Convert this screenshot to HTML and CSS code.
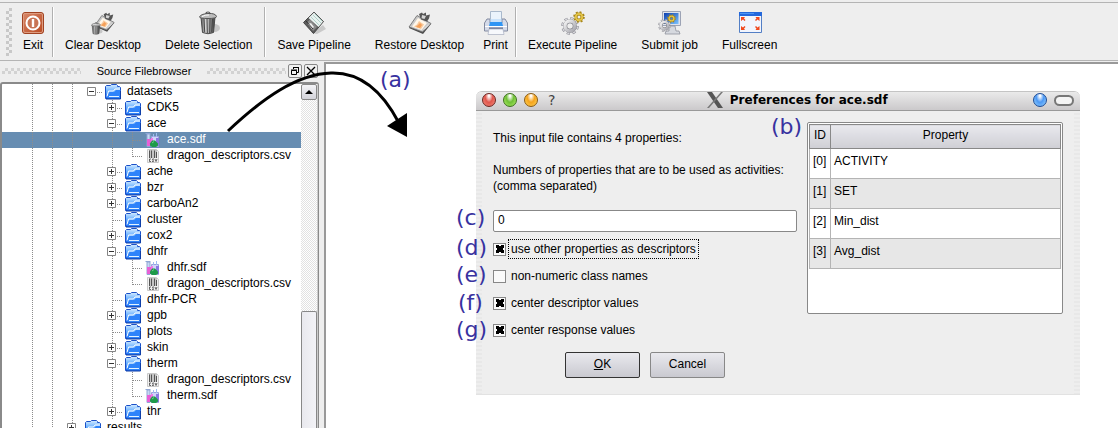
FILE: index.html
```html
<!DOCTYPE html>
<html lang="en">
<head>
<meta charset="utf-8">
<title>Preferences for ace.sdf</title>
<link rel="stylesheet" href="styles.css">
</head>
<body>
<svg class="defs" aria-hidden="true">
  <defs>
    <linearGradient id="gRed" x1="0" y1="0" x2="1" y2="1"><stop offset="0" stop-color="#d98a6c"/><stop offset="1" stop-color="#b8481f"/></linearGradient>
    <linearGradient id="gMetal" x1="0" x2="1"><stop offset="0" stop-color="#555"/><stop offset=".35" stop-color="#ddd"/><stop offset=".7" stop-color="#888"/><stop offset="1" stop-color="#333"/></linearGradient>
    <linearGradient id="gFolder" x1="0" y1="0" x2="0" y2="1"><stop offset="0" stop-color="#d5ecff"/><stop offset=".5" stop-color="#63adff"/><stop offset="1" stop-color="#1565ee"/></linearGradient>
    <linearGradient id="gGear" x1="0" y1="0" x2="1" y2="1"><stop offset="0" stop-color="#f4f4f4"/><stop offset="1" stop-color="#a5a5ac"/></linearGradient>
    <linearGradient id="gScreen" x1="0" y1="0" x2="1" y2="1"><stop offset="0" stop-color="#0c3fae"/><stop offset="1" stop-color="#7cc4ff"/></linearGradient>
    <symbol id="folder" viewBox="0 0 16 16">
      <path d="M.5 14.500v-12l1-1h4l1-1h5l1 1v1h2l1 1v11z" fill="url(#gFolder)" stroke="#1a50c8"/>
      <path d="M2 12.500L3.500 7h5l1.500-2h5" fill="none" stroke="#fff"/>
      <path d="M2 14.500L4.500 8h5l1.500-2h4.500v8.500z" fill="#2e83fa"/>
      <path d="M4 12.500h10" stroke="#e4f3ff"/>
      <path d="M1 15h14.500v-8" fill="none" stroke="#0e3fa8"/>
    </symbol>
    <symbol id="sdf" viewBox="0 0 16 16">
      <path d="M.5 1.500h5M2 2v12.500h3V2z" fill="#c6d8f4" stroke="#8fa6d4"/>
      <path d="M2 7h4v7H2z" fill="#e95fd6"/>
      <path d="M6.500 4.500h7v10h-7z" fill="#cfd4fa" stroke="#9aa0dc"/>
      <path d="M8.500 2v3M11.500 1v4" stroke="#9dbcf0"/>
      <path d="M6 6h2v5H6z" fill="#f07ae4"/><path d="M11 6h3v8h-3z" fill="#8a78e0"/>
      <path d="M7 8.500h3l3 3v2l-2 1.500H7L5 13.500v-2z" fill="#1e9a4a"/>
      <path d="M7 11l2-1.500" stroke="#6cd28c"/>
    </symbol>
    <symbol id="csv" viewBox="0 0 16 16">
      <path d="M2.500 1.500h9l2 2v11h-11z" fill="#f1f1f1" stroke="#c9c9c9"/>
      <path d="M4 3h8M4 5h8M4 7h8M4 9h8" stroke="#999"/>
      <path d="M4.500 2.500V10M6.500 2.500V10M9.500 2.500V10M11.500 4V10" stroke="#555"/>
      <path d="M6 11H4.500v2.500H6M9 11H7.500l1 2.500H7M10 11l1 2.500 1-2.500" fill="none" stroke="#444" stroke-width=".8"/>
    </symbol>
    <symbol id="v" viewBox="0 0 20 16"><path d="M10.500 0v16" stroke="#8c8c8c" stroke-dasharray="1 1"/></symbol>
    <symbol id="t" viewBox="0 0 20 16"><path d="M10.500 0v16M11 8.500h9" stroke="#8c8c8c" stroke-dasharray="1 1"/></symbol>
    <symbol id="l" viewBox="0 0 20 16"><path d="M10.500 0v9M11 8.500h9" stroke="#8c8c8c" stroke-dasharray="1 1"/></symbol>
    <symbol id="m" viewBox="0 0 20 16"><path d="M5.500 3.500h8v8h-8z" fill="#fff" stroke="#858585"/><path d="M7 7.500h5" stroke="#333"/><path d="M15 8.500h5M10.500 0v3M10.500 12v4" stroke="#8c8c8c" stroke-dasharray="1 1"/></symbol>
    <symbol id="p" viewBox="0 0 20 16"><use href="#m" width="20" height="16"/><path d="M9.500 5v5" stroke="#333"/></symbol>
    <symbol id="e" viewBox="0 0 20 16"><path d="M5.500 3.500h8v8h-8z" fill="#fff" stroke="#858585"/><path d="M7 7.500h5" stroke="#333"/><path d="M15 8.500h5" stroke="#8c8c8c" stroke-dasharray="1 1"/></symbol>
    <symbol id="gear" viewBox="0 0 18 18">
      <circle cx="9" cy="9" r="7" fill="none" stroke="#8c8c94" stroke-width="3.600" stroke-dasharray="3 2.498"/>
      <circle cx="9" cy="9" r="7" fill="none" stroke="#d8d8dc" stroke-width="2.600" stroke-dasharray="2 3.498" stroke-dashoffset="-.5"/>
      <circle cx="9" cy="9" r="4.800" fill="none" stroke="#6f6f76" stroke-width="4"/>
      <circle cx="9" cy="9" r="5" fill="none" stroke="url(#gGear)" stroke-width="3.400"/>
    </symbol>
    <symbol id="goldgear" viewBox="0 0 12 12">
      <circle cx="6" cy="6" r="4.800" fill="none" stroke="#a8871a" stroke-width="2" stroke-dasharray="1.900 1.870"/>
      <circle cx="6" cy="6" r="3" fill="none" stroke="#a58313" stroke-width="3"/>
      <circle cx="6" cy="6" r="3.200" fill="none" stroke="#e4c548" stroke-width="1.800"/>
    </symbol>
    <symbol id="board" viewBox="0 0 24 24">
      <path d="M1 17L10 6l13 7-8 10z" fill="#4b4b4b"/>
      <path d="M1 16L9 4.500l14 8L14.500 21z" fill="#c9c9c9" stroke="#666" stroke-width=".8"/>
      <path d="M4 15.500L10 7l9 5-5.500 7z" fill="#fff7ea"/>
      <path d="M6 15.500l3-2 2-3.500 2 1.500 3 2-3 4.500z" fill="#f8c89a"/><path d="M8 16l4-4 2 2-2 3z" fill="#f5a058"/>
      <path d="M11 3l3-1.500 1 1.500 3-1.500v3l4-1-1 4-2 3-6-2z" fill="#555"/><path d="M14 4l4 1-1.500 3-3-.8z" fill="#d4d4d4"/>
      <path d="M16 18.500l5-5" stroke="#eee"/>
    </symbol>
    <symbol id="bin" viewBox="0 0 24 24">
      <ellipse cx="17.500" cy="17" rx="5.500" ry="4" fill="#c6c6c6"/>
      <path d="M4 6h14l-1.500 15.500q-5.500 2.500-11 0z" fill="url(#gMetal)" stroke="#4a4a4a"/>
      <path d="M7 8l.7 13M10 8l.3 14M13 8l-.3 14M15.500 8l-.8 13" stroke="#474747"/>
      <path d="M2.500 6q1-3 8.500-3.500t8.500 3q0 2-8.500 2T2.500 6z" fill="#bcbcbc" stroke="#555"/>
      <path d="M9 3q0-2 2-2t2 2" fill="none" stroke="#555" stroke-width="1.200"/><path d="M5 5.500q4-2 7-1.500" stroke="#fff" fill="none"/>
    </symbol>
  </defs>
</svg>

<header class="toolbar">
  <span class="grip"></span>
  <button class="tool short"><svg viewBox="0 0 24 24"><rect x="1.500" y="1.500" width="21" height="21" rx="2.500" fill="url(#gRed)" stroke="#a14322"/><rect x="2.500" y="2.500" width="19" height="19" rx="1.500" fill="none" stroke="#dd9c80"/><circle cx="12" cy="12" r="6.500" fill="#c87555" stroke="#fff" stroke-width="2"/><path d="M12 8v8" stroke="#fff" stroke-width="2.400"/></svg>Exit</button>
  <span class="sep"></span>
  <button class="tool"><svg viewBox="0 0 24 24"><use href="#board" x="3" width="21" height="22"/><use href="#bin" x="-1" y="11" width="13" height="13"/></svg>Clear Desktop</button>
  <button class="tool"><svg viewBox="0 0 24 24"><use href="#bin" width="24" height="24"/></svg>Delete Selection</button>
  <span class="sep"></span>
  <button class="tool"><svg viewBox="0 0 24 24"><path d="M9 22l12-8 3 4-9 5z" fill="#c9c9c9"/><path d="M1.500 11.500L12 1l9.500 9.500L11.500 22.500z" fill="#5c5c5c" stroke="#444"/><path d="M6.500 7L12 1.500l9 9-4.500 5.500z" fill="#e9f1ef"/><path d="M11 4l8 8M9 6l8.500 8.500M13 3l7 7" stroke="#9fc9bf" stroke-width=".8"/><path d="M5 11.500l3-3 7 7.500-4 4z" fill="#8b8b8b"/><path d="M6 13l3-1 3 4-2 2z" fill="#eee"/><path d="M4 10l7 8" stroke="#333"/></svg>Save Pipeline</button>
  <button class="tool"><svg viewBox="0 0 24 24"><use href="#board" width="24" height="24"/></svg>Restore Desktop</button>
  <button class="tool short"><svg viewBox="0 0 24 24"><path d="M6.500.5h11v12h-11z" fill="#eaf3fc" stroke="#a9b9cc"/><path d="M3 8h3v4h12V8h3l2.500 4v8h-23v-8z" fill="#d5dbe9" stroke="#828aa0"/><path d="M6.500 8v3h11V8z" fill="#c9e2fa"/><path d="M6 11h12l1 4H5z" fill="#2f95f4"/><path d="M1 15.500h22" stroke="#fff"/><path d="M5 16.500h14v2H5z" fill="#5e6886"/><path d="M5 18h14l1 5.500H4z" fill="#f6f8fc" stroke="#b0b6c6" stroke-width=".8"/></svg>Print</button>
  <span class="sep"></span>
  <button class="tool"><svg viewBox="0 0 24 24"><use href="#gear" x="0" y="6" width="18" height="18"/><use href="#goldgear" x="12" y="0" width="12" height="12"/></svg>Execute Pipeline</button>
  <button class="tool"><svg viewBox="0 0 24 24"><path d="M4.500.5h18v14h-18z" fill="#dfe3ec" stroke="#9ca3b5"/><path d="M6 2h14.500v11H6z" fill="url(#gScreen)"/><path d="M11 15h6l1 5h3l1 3H7l1-3h3z" fill="#d6d9df" stroke="#8f939d" stroke-width=".8"/><use href="#goldgear" x="9" y="3" width="9" height="9"/><use href="#gear" x="0" y="8" width="13" height="13"/></svg>Submit job</button>
  <button class="tool"><svg viewBox="0 0 24 24"><path d="M1.500 1.500h22v20h-22z" fill="#f2f5fd" stroke="#537fc5"/><path d="M1 1h23v4H1z" fill="#2468dc"/><path d="M2 2h14v1H2z" fill="#4b93f4"/><g fill="#f0481e"><path d="M3 6h4L6 7.500l1.500 1.500-1 1L5 8.500 3 10zM21.500 6h-4l1 1.500L17 9l1 1 1.500-1.500 2 1.500zM3 19h4l-1-1.500L7.500 16l-1-1L5 16.500 3 15zM21.500 19h-4l1-1.500L17 16l1-1 1.500 1.500 2-1.500z"/></g></svg>Fullscreen</button>
</header>

<main class="main">
  <aside class="dock">
    <div class="dock-title">
      <span class="dots"></span><h2>Source Filebrowser</h2><span class="dots"></span>
      <button class="mini" aria-label="Float"><svg viewBox="0 0 12 12"><path d="M4.500 4V2.500h5v5H8M4 2.500h6M2.500 5.500h5v4h-5zM2 5h6" fill="none" stroke="#000"/></svg></button>
      <button class="mini" aria-label="Close"><svg viewBox="0 0 12 12"><path d="M2 2l8 8M10 2l-8 8" stroke="#000" stroke-width="1.300"/></svg></button>
    </div>
    <div class="browser">
      <ul class="tree">
        <li><svg><use href="#v"/></svg><svg><use href="#v"/></svg><svg><use href="#v"/></svg><svg><use href="#e"/></svg><svg class="ico"><use href="#folder"/></svg>datasets</li>
        <li><svg><use href="#v"/></svg><svg><use href="#v"/></svg><svg><use href="#v"/></svg><svg></svg><svg><use href="#p"/></svg><svg class="ico"><use href="#folder"/></svg>CDK5</li>
        <li><svg><use href="#v"/></svg><svg><use href="#v"/></svg><svg><use href="#v"/></svg><svg></svg><svg><use href="#m"/></svg><svg class="ico"><use href="#folder"/></svg>ace</li>
        <li class="selected"><svg><use href="#v"/></svg><svg><use href="#v"/></svg><svg><use href="#v"/></svg><svg></svg><svg><use href="#v"/></svg><svg><use href="#t"/></svg><svg class="ico"><use href="#sdf"/></svg>ace.sdf</li>
        <li><svg><use href="#v"/></svg><svg><use href="#v"/></svg><svg><use href="#v"/></svg><svg></svg><svg><use href="#v"/></svg><svg><use href="#l"/></svg><svg class="ico"><use href="#csv"/></svg>dragon_descriptors.csv</li>
        <li><svg><use href="#v"/></svg><svg><use href="#v"/></svg><svg><use href="#v"/></svg><svg></svg><svg><use href="#p"/></svg><svg class="ico"><use href="#folder"/></svg>ache</li>
        <li><svg><use href="#v"/></svg><svg><use href="#v"/></svg><svg><use href="#v"/></svg><svg></svg><svg><use href="#p"/></svg><svg class="ico"><use href="#folder"/></svg>bzr</li>
        <li><svg><use href="#v"/></svg><svg><use href="#v"/></svg><svg><use href="#v"/></svg><svg></svg><svg><use href="#p"/></svg><svg class="ico"><use href="#folder"/></svg>carboAn2</li>
        <li><svg><use href="#v"/></svg><svg><use href="#v"/></svg><svg><use href="#v"/></svg><svg></svg><svg><use href="#t"/></svg><svg class="ico"><use href="#folder"/></svg>cluster</li>
        <li><svg><use href="#v"/></svg><svg><use href="#v"/></svg><svg><use href="#v"/></svg><svg></svg><svg><use href="#p"/></svg><svg class="ico"><use href="#folder"/></svg>cox2</li>
        <li><svg><use href="#v"/></svg><svg><use href="#v"/></svg><svg><use href="#v"/></svg><svg></svg><svg><use href="#m"/></svg><svg class="ico"><use href="#folder"/></svg>dhfr</li>
        <li><svg><use href="#v"/></svg><svg><use href="#v"/></svg><svg><use href="#v"/></svg><svg></svg><svg><use href="#v"/></svg><svg><use href="#t"/></svg><svg class="ico"><use href="#sdf"/></svg>dhfr.sdf</li>
        <li><svg><use href="#v"/></svg><svg><use href="#v"/></svg><svg><use href="#v"/></svg><svg></svg><svg><use href="#v"/></svg><svg><use href="#l"/></svg><svg class="ico"><use href="#csv"/></svg>dragon_descriptors.csv</li>
        <li><svg><use href="#v"/></svg><svg><use href="#v"/></svg><svg><use href="#v"/></svg><svg></svg><svg><use href="#t"/></svg><svg class="ico"><use href="#folder"/></svg>dhfr-PCR</li>
        <li><svg><use href="#v"/></svg><svg><use href="#v"/></svg><svg><use href="#v"/></svg><svg></svg><svg><use href="#p"/></svg><svg class="ico"><use href="#folder"/></svg>gpb</li>
        <li><svg><use href="#v"/></svg><svg><use href="#v"/></svg><svg><use href="#v"/></svg><svg></svg><svg><use href="#t"/></svg><svg class="ico"><use href="#folder"/></svg>plots</li>
        <li><svg><use href="#v"/></svg><svg><use href="#v"/></svg><svg><use href="#v"/></svg><svg></svg><svg><use href="#p"/></svg><svg class="ico"><use href="#folder"/></svg>skin</li>
        <li><svg><use href="#v"/></svg><svg><use href="#v"/></svg><svg><use href="#v"/></svg><svg></svg><svg><use href="#m"/></svg><svg class="ico"><use href="#folder"/></svg>therm</li>
        <li><svg><use href="#v"/></svg><svg><use href="#v"/></svg><svg><use href="#v"/></svg><svg></svg><svg><use href="#v"/></svg><svg><use href="#t"/></svg><svg class="ico"><use href="#csv"/></svg>dragon_descriptors.csv</li>
        <li><svg><use href="#v"/></svg><svg><use href="#v"/></svg><svg><use href="#v"/></svg><svg></svg><svg><use href="#v"/></svg><svg><use href="#l"/></svg><svg class="ico"><use href="#sdf"/></svg>therm.sdf</li>
        <li><svg><use href="#v"/></svg><svg><use href="#v"/></svg><svg><use href="#v"/></svg><svg></svg><svg><use href="#p"/></svg><svg class="ico"><use href="#folder"/></svg>thr</li>
        <li><svg><use href="#v"/></svg><svg><use href="#v"/></svg><svg><use href="#p"/></svg><svg class="ico"><use href="#folder"/></svg>results</li>
      </ul>
      <div class="scrollbar">
        <button class="up" aria-label="Scroll up"><svg viewBox="0 0 14 14"><path d="M3 9l4-4 4 4z"/></svg></button>
        <span class="track"></span>
        <span class="thumb"></span>
      </div>
    </div>
  </aside>

  <section class="workspace">
    <form class="dialog">
      <div class="titlebar">
        <span class="ball red"></span><span class="ball green"></span><span class="ball orange"></span><span class="help">?</span>
        <h1><svg viewBox="0 0 16 16"><path d="M0 0h5l11 16h-5z" fill="#555"/><path d="M14 0h2L2 16H0z" fill="#777"/></svg>Preferences for ace.sdf</h1>
        <span class="ball blue"></span><span class="pill"></span>
      </div>
      <div class="content">
        <div class="fields">
          <p>This input file contains 4 properties:</p>
          <label class="activities" for="act">Numbers of properties that are to be used as activities:<br>(comma separated)</label>
          <input class="line" id="act" type="text" value="0">
          <label class="check focus"><input type="checkbox" checked><span>use other properties as descriptors</span></label>
          <label class="check"><input type="checkbox"><span>non-numeric class names</span></label>
          <label class="check"><input type="checkbox" checked><span>center descriptor values</span></label>
          <label class="check"><input type="checkbox" checked><span>center response values</span></label>
          <div class="actions"><button class="push default" type="button"><u>O</u>K</button><button class="push" type="button">Cancel</button></div>
        </div>
        <div class="listing">
          <table>
            <thead><tr><th class="id">ID</th><th>Property</th></tr></thead>
            <tbody>
              <tr><td>[0]</td><td>ACTIVITY</td></tr>
              <tr><td>[1]</td><td>SET</td></tr>
              <tr><td>[2]</td><td>Min_dist</td></tr>
              <tr><td>[3]</td><td>Avg_dist</td></tr>
            </tbody>
          </table>
        </div>
      </div>
    </form>
  </section>
</main>

<svg class="arrow" viewBox="0 0 190 74" aria-hidden="true"><path d="M3 65C38 32 72 8 106 7C138 6 160 30 174 57" fill="none" stroke="#000" stroke-width="3"/><path d="M162 60l20-13v24z"/></svg>
<span class="note note-a">(a)</span>
<span class="note note-b">(b)</span>
<span class="note note-c">(c)</span>
<span class="note note-d">(d)</span>
<span class="note note-e">(e)</span>
<span class="note note-f">(f)</span>
<span class="note note-g">(g)</span>
</body>
</html>
```
FILE: styles.css
```css
* { box-sizing: border-box; }
body {
  margin: 0;
  height: 100vh;
  display: flex;
  flex-direction: column;
  position: relative;
  overflow: hidden;
  background: #eee;
  color: #000;
  font: 12px/16px "Liberation Sans", sans-serif;
}
button, input { font: inherit; color: inherit; margin: 0; }
h1, h2, p, ul { margin: 0; padding: 0; }
svg { display: block; flex: none; }
.defs { position: absolute; width: 0; height: 0; }

.toolbar {
  display: flex;
  align-items: stretch;
  margin-top: 2px;
  border-top: 1px solid #b4b4b4;
  border-bottom: 1px solid #b4b4b4;
  padding: 4px 4px 3px;
}
.grip {
  width: 6px;
  margin: 1px 2px;
  background: conic-gradient(#c8c8c8 25%, transparent 0 50%, #c8c8c8 0 75%, transparent 0) 0 0 / 6px 6px;
}
.tool {
  display: flex;
  flex-direction: column;
  align-items: center;
  gap: 2px;
  border: 0;
  background: none;
  padding: 4px 12px;
  white-space: nowrap;
}
.tool svg { width: 24px; height: 24px; }
.tool.short { padding-left: 7px; padding-right: 7px; }
.sep { width: 1px; background: #b0b0b0; box-shadow: 1px 0 #fff; }

.main { flex: 1; min-height: 0; display: flex; gap: 5px; }
.dock { flex: none; width: 319px; display: flex; flex-direction: column; min-height: 0; }
.dock-title { display: flex; align-items: center; gap: 2px; height: 21px; padding: 0 1px 2px 2px; }
.dock-title h2 { flex: none; padding: 0 14px; font-size: 11px; font-weight: 400; }
.dots {
  flex: 1;
  height: 6px;
  background: conic-gradient(#d2d2d2 25%, transparent 0 50%, #d2d2d2 0 75%, transparent 0) 0 0 / 6px 6px;
}
.mini {
  flex: none;
  width: 14px;
  height: 14px;
  padding: 0;
  border: 1px solid #888;
  border-radius: 2px;
  background: #f1f1f1;
}
.mini svg { width: 12px; height: 12px; }
.browser {
  flex: 1;
  min-height: 0;
  display: flex;
  overflow: hidden;
  border: 1px solid #8a8a8a;
  border-top-width: 2px;
  border-bottom: 0;
  border-left-width: 2px;
  border-radius: 3px 3px 0 0;
  background: #fff;
}
.tree { flex: 1; list-style: none; overflow: hidden; line-height: 14px; }
.tree li { display: flex; height: 16px; padding-left: 20px; white-space: nowrap; }
.tree svg { width: 20px; height: 16px; }
.tree .ico { width: 16px; margin: 0 6px 0 3px; }
.tree .selected { background: #678db2; color: #fff; }
.scrollbar { width: 17px; display: flex; flex-direction: column; border-right: 1px solid #ccc; }
.up { height: 16px; padding: 0; border: 1px solid #888; border-radius: 2px; background: linear-gradient(#f4f4f7, #d3d3da); }
.up svg { width: 14px; height: 14px; }
.track { flex: 212; background: conic-gradient(#e2e2e2 25%, #fff 0 50%, #e2e2e2 0 75%, #fff 0) 0 0 / 2px 2px; }
.thumb { flex: 116; border: 1px solid #888; border-bottom: 0; border-radius: 2px 2px 0 0; background: linear-gradient(90deg, #e9e9ee, #f3f3f7); }

.workspace { flex: 1; position: relative; border: 2px solid #999; border-width: 2px 0 0 2px; margin-top: 1px; background: #fff; overflow: hidden; }
.dialog {
  position: absolute;
  left: 150px;
  top: 27px;
  width: 604px;
  border-top: 1px solid #c4c4c4;
  border-bottom: 1px solid #e2e2e2;
  border-radius: 6px 6px 0 0;
  overflow: hidden;
  background: #eee;
}
.titlebar {
  display: flex;
  align-items: center;
  gap: 7px;
  height: 19px;
  padding: 0 6px 2px;
  border-bottom: 1px solid #999;
  background: linear-gradient(#eaeaea, #cbc9cb);
}
.titlebar h1 {
  flex: 1;
  display: flex;
  justify-content: center;
  gap: 7px;
  padding-left: 6px;
  font: bold 12px/16px "DejaVu Sans", sans-serif;
}
.titlebar h1 svg { width: 16px; height: 16px; }
.ball { width: 14px; height: 14px; border-radius: 50%; border: 1px solid; }
.red { border-color: #6b2520; background: radial-gradient(ellipse at 50% 15%, #fff 5%, #e0564c 45%, #f58e80); }
.green { border-color: #3b701c; background: radial-gradient(ellipse at 50% 15%, #fff 5%, #6fbf35 45%, #b4f26c); }
.orange { border-color: #8a5a10; background: radial-gradient(ellipse at 50% 15%, #fff 5%, #f5a31c 45%, #ffd75c); }
.blue { border-color: #1c4a94; background: radial-gradient(ellipse at 50% 15%, #fff 5%, #4c98f4 45%, #9cd6ff); }
.pill { width: 20px; height: 11px; border: 2px solid #777; border-radius: 6px; background: #f4f4f4; }
.help { padding-left: 3px; color: #444; font: 14px/16px "DejaVu Sans", sans-serif; }
.content {
  display: flex;
  gap: 10px;
  min-height: 283px;
  padding: 11px 17px 15px;
  background:
    repeating-linear-gradient(#eee 0 2px, #e8e8e8 2px 4px) left / 6px 100% no-repeat,
    repeating-linear-gradient(#eee 0 2px, #e8e8e8 2px 4px) right / 6px 100% no-repeat;
}
.fields { width: 304px; display: flex; flex-direction: column; padding-top: 8px; }
.activities { margin: 16px 0; white-space: nowrap; }
.line { width: 100%; height: 22px; padding: 0 4px 3px; border: 1px solid #888; border-radius: 2px; background: #fff; margin-bottom: 5px; }
.check { display: flex; align-items: center; gap: 2px; height: 20px; margin: 2px 0 5px; }
.check span { padding: 1px 2px; border: 1px solid transparent; }
.focus span { border: 1px dotted #000; }
.check input {
  appearance: none;
  width: 13px;
  height: 13px;
  border: 1px solid #888;
  background: #fafafa;
}
.check input:checked {
  background:
    linear-gradient(45deg, transparent 36%, #000 36% 64%, transparent 64%) center / 8px 8px no-repeat,
    linear-gradient(-45deg, transparent 36%, #000 36% 64%, transparent 64%) center / 8px 8px no-repeat, #fafafa;
}
.actions { display: flex; gap: 10px; padding-left: 72px; margin-top: 7px; }
.push { width: 75px; height: 26px; padding: 0 0 2px; border: 1px solid #888; border-radius: 2px; background: linear-gradient(#e9e9ee, #c9c9d0); }
.default { border-color: #333; }
.listing { flex: 1; height: 192px; border: 1px solid #888; border-radius: 2px; padding: 1px; background: #fff; }
table { width: 100%; border-collapse: collapse; }
th { height: 24px; padding: 0 0 3px; font-weight: 400; border: 1px solid #888; background: linear-gradient(#e8e8ed, #cfcfd5); }
.id { width: 21px; }
td { height: 30px; padding: 0 2px 6px 3px; border: 1px solid #b4b4b4; }
tr:nth-child(even) td { background: #e7e7e7; }

.arrow { position: absolute; left: 225px; top: 66px; width: 190px; height: 74px; }
.note { position: absolute; color: #3832a0; font: 22px/26px "DejaVu Sans", sans-serif; }
.note-a { left: 380px; top: 67px; }
.note-b { left: 771px; top: 114px; }
.note-c { left: 456px; top: 205px; }
.note-d { left: 456px; top: 235px; }
.note-e { left: 456px; top: 262px; }
.note-f { left: 458px; top: 290px; }
.note-g { left: 456px; top: 317px; }
```
